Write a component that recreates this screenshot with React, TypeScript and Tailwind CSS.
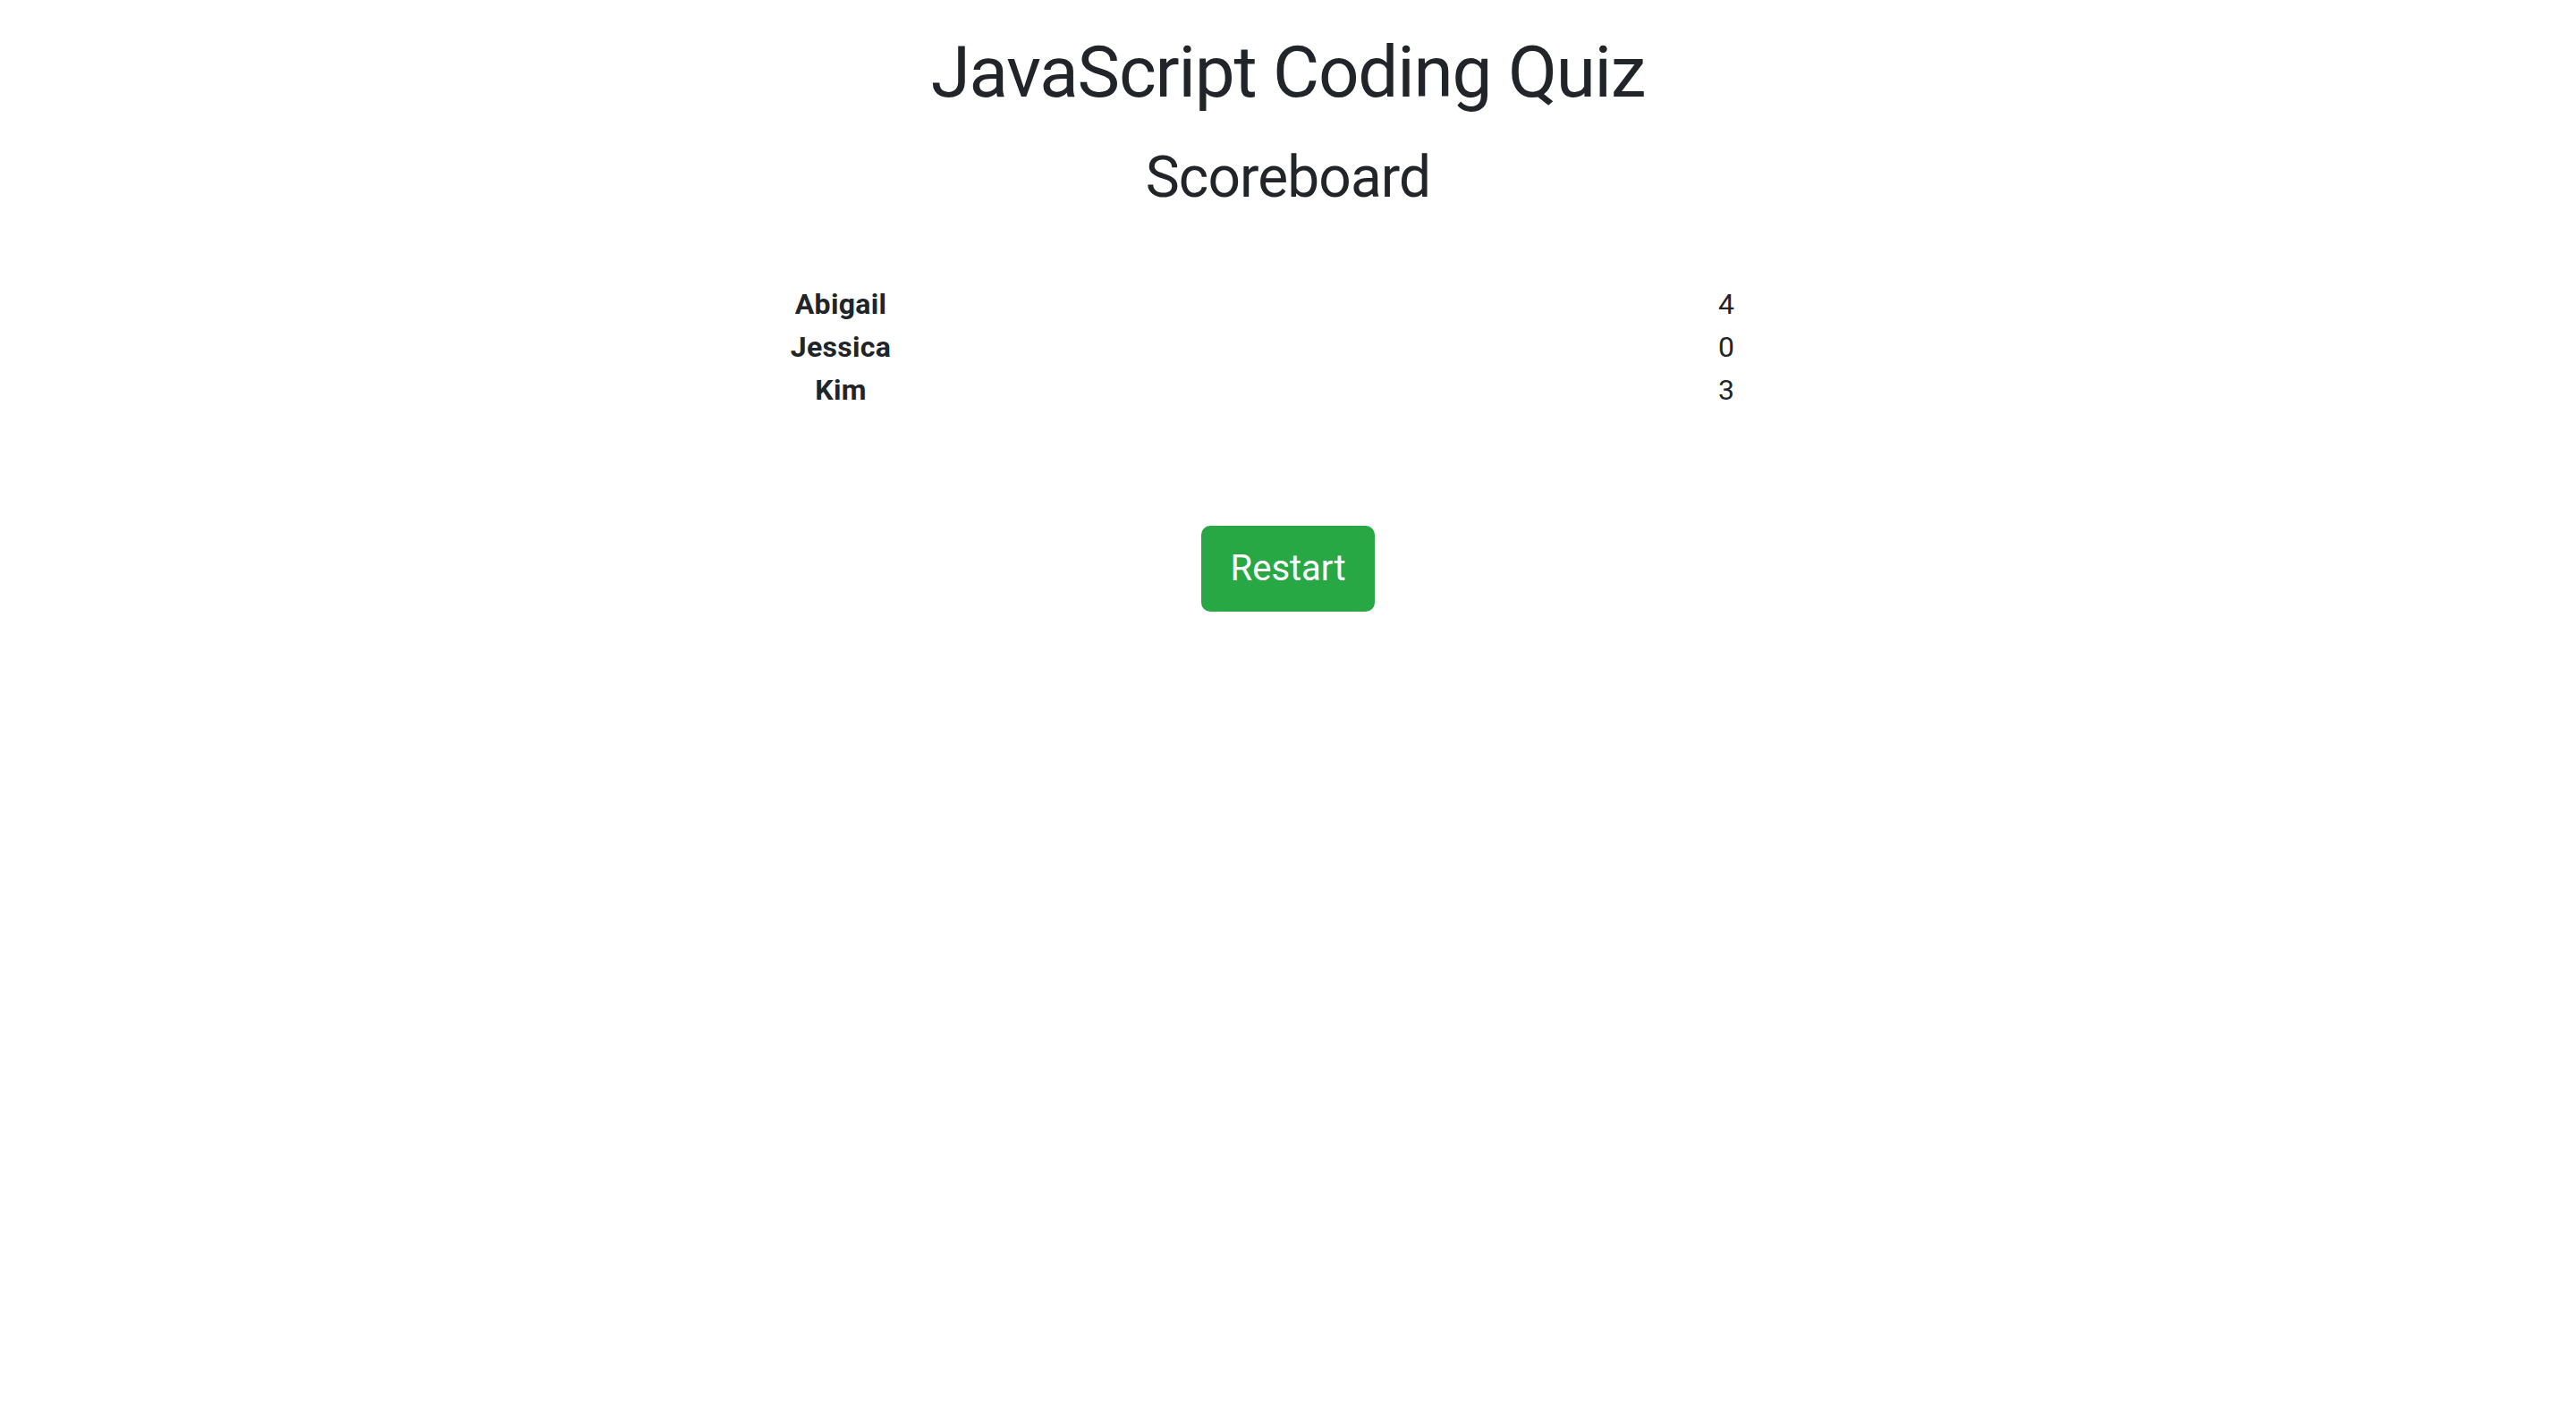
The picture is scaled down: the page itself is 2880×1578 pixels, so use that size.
export default function App() {
  const scores = [
    { name: "Abigail", score: 4 },
    { name: "Jessica", score: 0 },
    { name: "Kim", score: 3 },
  ];

  return (
    <div className="min-h-screen bg-white text-[#212529] font-['Roboto','Liberation_Sans',sans-serif]">
      <div className="mx-auto flex w-[2280px] flex-col items-center text-center">
        <h1 className="mt-[33px] text-[80px] leading-[96px] font-normal tracking-[-1.2px]">JavaScript Coding Quiz</h1>
        <h2 className="mt-[31px] text-[64px] leading-[77px] font-normal tracking-[-0.9px]">Scoreboard</h2>

        {/* Scores table */}
        <div className="mt-[79px] mr-[10px] grid w-[1980px] grid-cols-2 text-[32px] leading-[48px]">
          {scores.map((s) => (
            <div key={s.name} className="contents">
              <div className="font-bold tracking-[0.3px]">{s.name}</div>
              <div>{s.score}</div>
            </div>
          ))}
        </div>

        <button className="mt-[128px] rounded-[10px] border-2 border-[#28a745] bg-[#28a745] px-[31px] py-[16px] text-[40px] leading-[60px] text-white">
          Restart
        </button>
      </div>
    </div>
  );
}
